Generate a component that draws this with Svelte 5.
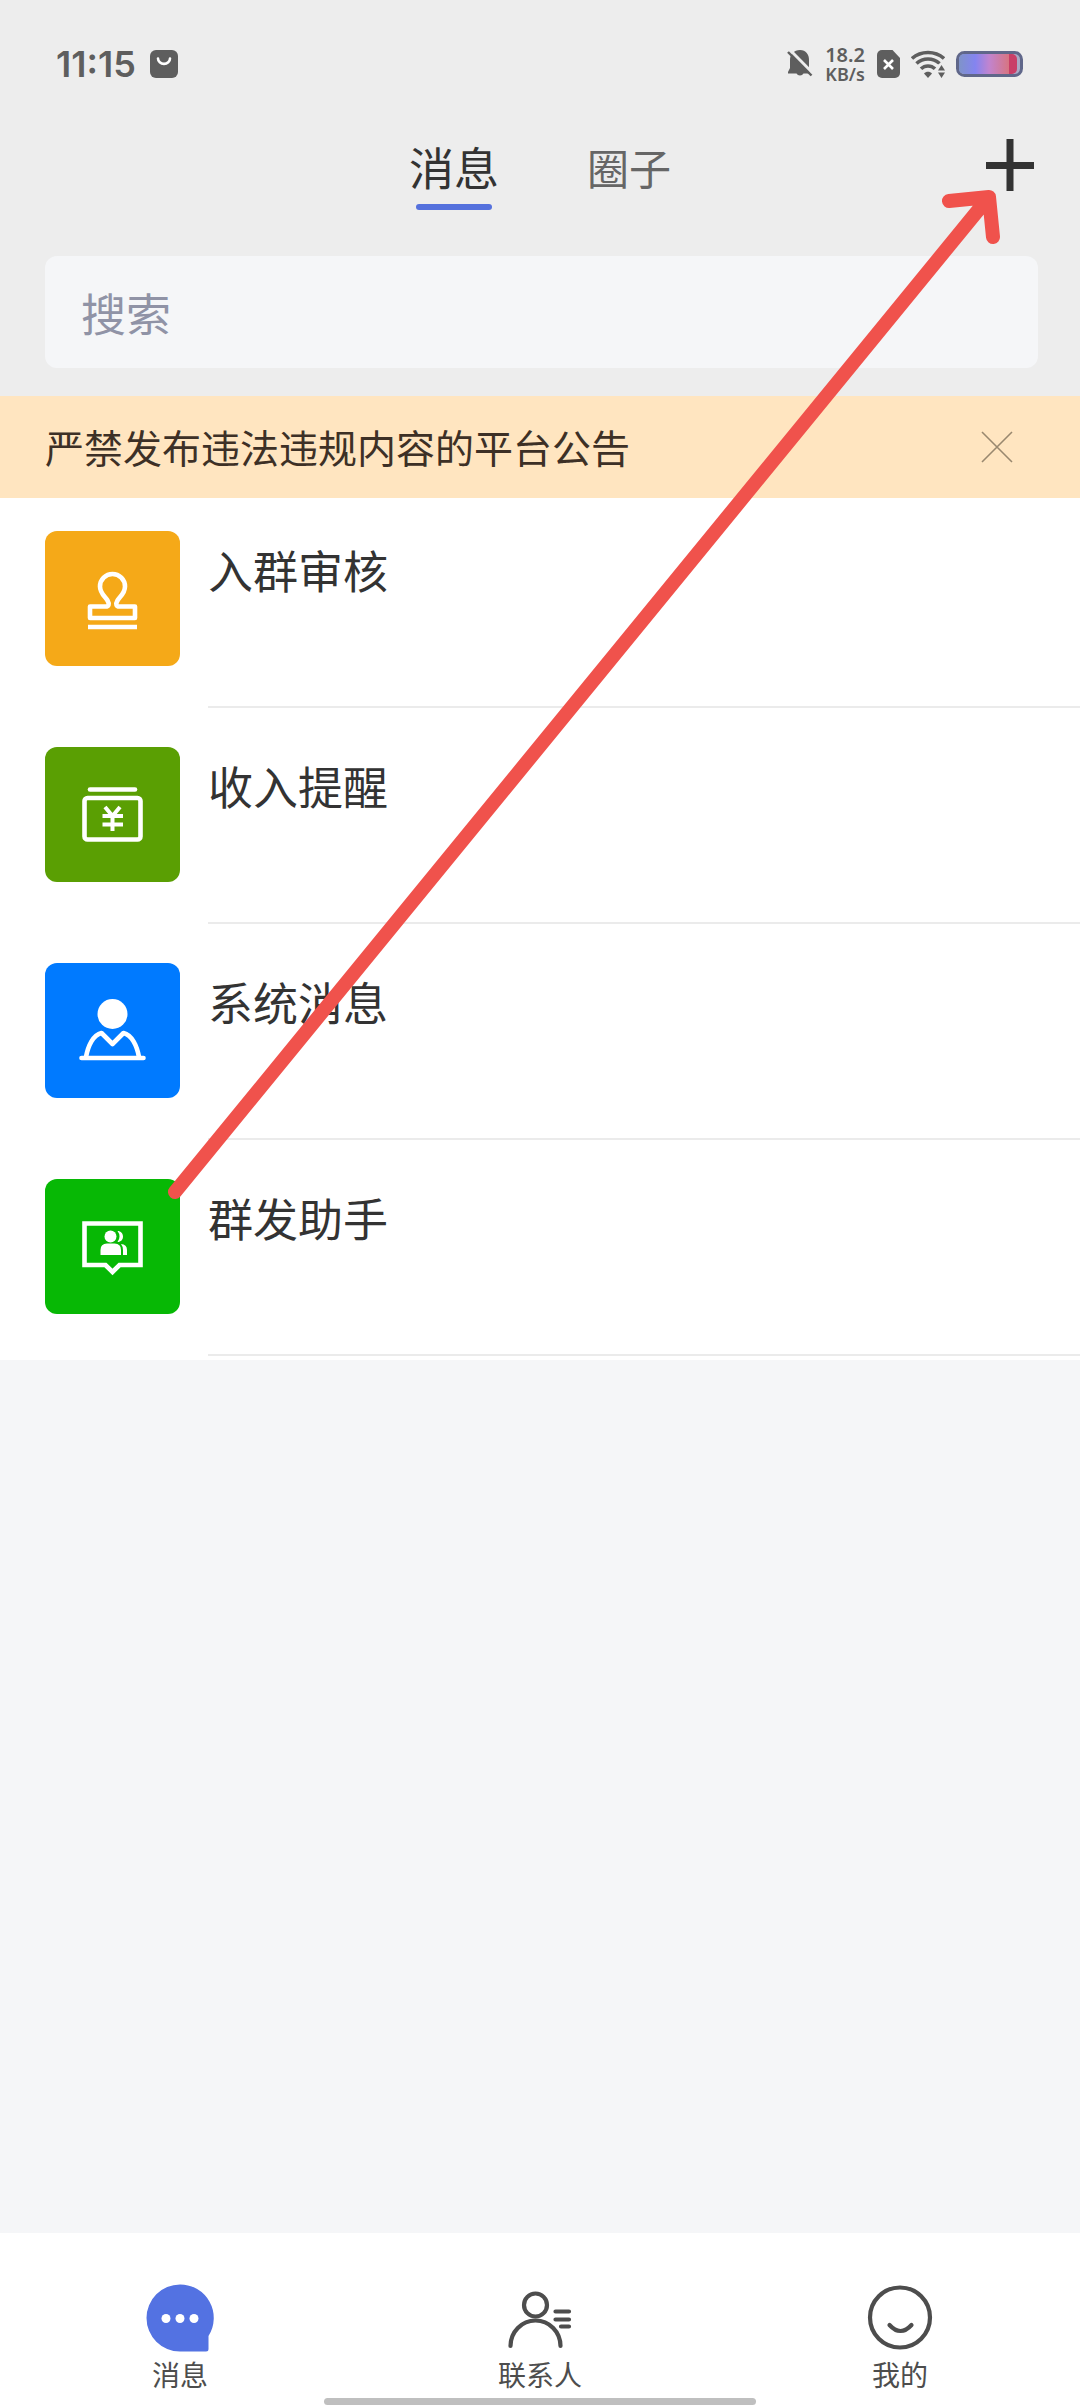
<script lang="ts">
	type Kind = 'stamp' | 'income' | 'system' | 'group';

	const entries: { kind: Kind; title: string; color: string }[] = [
		{ kind: 'stamp', title: '入群审核', color: '#f5a918' },
		{ kind: 'income', title: '收入提醒', color: '#5a9f03' },
		{ kind: 'system', title: '系统消息', color: '#007aff' },
		{ kind: 'group', title: '群发助手', color: '#07b805' }
	];

	const tabs = ['消息', '圈子'];

	let activeTab = $state('消息');
	let keyword = $state('');
	let noticeVisible = $state(true);
</script>

<div class="page">
	<header class="header">
		<div class="status-bar">
			<div class="status-left">
				<span class="clock">11:15</span>
				<svg width="28" height="28" viewBox="0 0 28 28" fill="none">
					<rect width="28" height="28" rx="6" fill="#5e5e5e" />
					<path d="M8 8.500a6 5.400 0 0 0 12 0" stroke="#fff" stroke-width="2.600" stroke-linecap="round" />
				</svg>
			</div>
			<div class="status-right">
				<!-- Muted bell -->
				<svg width="26" height="28" viewBox="0 0 26 28">
					<path d="M13 0C7 0 3 4.500 3 10v8L1 22v1.500h8.500a4 4 0 0 0 7 0H23L22 20V10C22 4.500 19 0 13 0z" fill="#5e5e5e" />
					<path d="M3 0L26 23.500" stroke="#ededed" stroke-width="3" />
					<path d="M1 2L24.500 25.500" stroke="#5e5e5e" stroke-width="2.400" />
				</svg>
				<div class="speed">
					<span class="speed-value">18.2</span>
					<span class="speed-unit">KB/s</span>
				</div>
				<!-- SIM missing -->
				<svg width="23" height="28" viewBox="0 0 23 28">
					<path d="M5 0h10.500L23 8v15a5 5 0 0 1-5 5H5a5 5 0 0 1-5-5V5a5 5 0 0 1 5-5z" fill="#5e5e5e" />
					<path d="M7 10l9 9M16 10l-9 9" stroke="#fff" stroke-width="2.600" />
				</svg>
				<!-- Wifi -->
				<svg width="34" height="28" viewBox="0 0 34 28" fill="none">
					<path d="M1 8.500C10 .5 24 .5 33 8.500" stroke="#5e5e5e" stroke-width="3.600" />
					<path d="M5.500 13.500c6.500-6 16.500-6 23 0" stroke="#5e5e5e" stroke-width="3.600" />
					<path d="M10 18.800c4-3.800 10-3.800 14 0" stroke="#5e5e5e" stroke-width="3.600" />
					<path d="M13 23.500c2-2.200 6-2.200 8 0L17 28z" fill="#5e5e5e" />
					<path d="M26 14.500h8v13.500h-8z" fill="#ededed" />
					<path d="M27 20.500l3.500-5.500 3.500 5.500zM27 22.500l3.500 5.500 3.500-5.500z" fill="#5e5e5e" />
				</svg>
				<!-- Battery -->
				<svg width="67" height="26" viewBox="0 0 67 26">
					<defs>
						<linearGradient id="charge">
							<stop offset="0" stop-color="#7f93c9" />
							<stop offset="0.28" stop-color="#8484f0" />
							<stop offset="0.52" stop-color="#c184cf" />
							<stop offset="0.86" stop-color="#d77582" />
							<stop offset="0.87" stop-color="#c93f68" />
							<stop offset="1" stop-color="#c93f68" />
						</linearGradient>
					</defs>
					<rect x="1.500" y="1.500" width="64" height="23" rx="7" fill="#a9a9c4" stroke="#60678a" stroke-width="3" />
					<rect x="3" y="3" width="58" height="20" rx="5" fill="url(#charge)" />
				</svg>
			</div>
		</div>

		<div class="top-bar">
			<div class="tabs" role="tablist">
				{#each tabs as tab}
					<button
						class="tab"
						class:active={activeTab === tab}
						role="tab"
						aria-selected={activeTab === tab}
						onclick={() => (activeTab = tab)}
					>
						{tab}
					</button>
				{/each}
			</div>
			<button class="add-btn" aria-label="添加">
				<svg width="48" height="52" viewBox="0 0 48 52">
					<path d="M24 0v52M0 26.500h48" stroke="#333" stroke-width="7" />
				</svg>
			</button>
		</div>

		<input class="search" type="text" placeholder="搜索" aria-label="搜索" bind:value={keyword} />
	</header>

	{#if noticeVisible}
		<div class="notice">
			<span class="notice-text">严禁发布违法违规内容的平台公告</span>
			<button class="notice-close" aria-label="关闭" onclick={() => (noticeVisible = false)}>
				<svg width="32" height="32" viewBox="0 0 32 32">
					<path d="M1 1l30 30M31 1L1 31" stroke="#99886f" stroke-width="1.600" />
				</svg>
			</button>
		</div>
	{/if}

	<ul class="list">
		{#each entries as entry}
			<li>
				<a class="entry" href="#{entry.kind}">
					<svg class="entry-icon" viewBox="0 0 135 135" fill="none" stroke="#fff" stroke-width="4.600" stroke-linejoin="round">
						<rect width="135" height="135" rx="12" fill={entry.color} stroke="none" />
						{#if entry.kind === 'stamp'}
							<path d="M45 87V75.500H60.500C64 75.500 64.500 73 62.500 69.500C60.500 66 55 62.500 55 55.500A12.500 12.500 0 0 1 80 55.500C80 62.500 74.500 66 72.500 69.500C70.500 73 71 75.500 74.500 75.500H90V87Z" />
							<path d="M43 96H92" />
						{:else if entry.kind === 'income'}
							<path d="M45 42.500H90" stroke-linecap="round" />
							<rect x="39.500" y="51" width="56" height="41.500" rx="3" />
							<path d="M60 60L67.500 69L75 60M67.500 68V84M57.500 69H78M57.500 77.500H78" stroke-width="4" />
						{:else if entry.kind === 'system'}
							<circle cx="67.500" cy="51" r="15" fill="#fff" stroke="none" />
							<path d="M41 94C43 83 48 72 56.500 70L67.500 81L78.500 70C87 72 92 83 94 94" />
							<path d="M36.500 95H98.500" stroke-linecap="round" />
						{:else}
							<path d="M39.500 44.500H95.500V86H74.500L67.500 93L60.500 86H39.500Z" stroke-linejoin="miter" />
							<g fill="#fff" stroke="none">
								<circle cx="65.500" cy="57.500" r="6" />
								<path d="M55.500 76V71Q55.500 64.500 62 64.500H69.500Q76 64.500 76 71V76Z" />
								<path d="M72.500 52C76 52 78 54.500 78 57.500S76 63 72.500 63Q74.500 60.500 74.500 57.500T72.500 52Z" />
								<path d="M76 65Q82 65.500 82 71V76H78V71Q78 67.500 76 65Z" />
							</g>
						{/if}
					</svg>
					<span class="entry-body">{entry.title}</span>
				</a>
			</li>
		{/each}
	</ul>

	<nav class="bottom-nav">
		<a class="nav-item" href="#messages">
			<svg width="68" height="68" viewBox="0 0 68 68">
				<path d="M34 0.500A33.500 33.500 0 0 1 62.500 52V65Q62.500 67.500 60 67.500H34A33.500 33.500 0 0 1 34 0.500Z" fill="#5372e2" />
				<circle cx="20" cy="34.500" r="4.500" fill="#fff" />
				<circle cx="34" cy="34.500" r="4.500" fill="#fff" />
				<circle cx="48" cy="34.500" r="4.500" fill="#fff" />
			</svg>
			<span>消息</span>
		</a>
		<a class="nav-item" href="#contacts">
			<svg width="68" height="68" viewBox="0 0 68 68" fill="none" stroke="#4d4d4d" stroke-width="4.200" stroke-linecap="round">
				<circle cx="29.500" cy="21" r="11.500" />
				<path d="M4.500 62A25 25.500 0 0 1 54.500 62" />
				<path d="M49.500 27.500H63M49.500 35.500H63M55 42.500H63" />
			</svg>
			<span>联系人</span>
		</a>
		<a class="nav-item" href="#me">
			<svg width="68" height="68" viewBox="0 0 68 68" fill="none" stroke="#4d4d4d" stroke-width="4.200" stroke-linecap="round">
				<circle cx="34" cy="33.500" r="30" />
				<path d="M23.500 41Q34.500 53 45.500 41" />
			</svg>
			<span>我的</span>
		</a>
		<div class="home-indicator"></div>
	</nav>

	<!-- Hint arrow pointing at the add button -->
	<svg class="hint-arrow" viewBox="0 0 1080 1220" fill="none" aria-hidden="true">
		<path d="M175 1192L989 197M949 201L989 197L993 237" stroke="#f0524c" stroke-width="14" stroke-linecap="round" stroke-linejoin="round" />
	</svg>
</div>

<style>
	:global(body) {
		background: #f5f6f8;
	}

	.page {
		position: relative;
		display: flex;
		flex-direction: column;
		min-height: 100vh;
		font-family: 'Noto Sans CJK SC', sans-serif;
		color: #333;
	}

	svg {
		display: block;
		flex-shrink: 0;
	}

	button {
		padding: 0;
		border: none;
		background: none;
		font: inherit;
		color: inherit;
		cursor: pointer;
	}

	a {
		color: inherit;
		text-decoration: none;
	}

	.header {
		display: flex;
		flex-direction: column;
		padding-bottom: 28px;
		background: #ededed;
	}

	.status-bar {
		display: flex;
		align-items: center;
		justify-content: space-between;
		height: 128px;
		padding: 0 57px 0 56px;
		color: #5e5e5e;
	}

	.status-left {
		display: flex;
		align-items: center;
		gap: 14px;
	}

	.clock {
		font-family: Inter, sans-serif;
		font-size: 36px;
		font-weight: 600;
	}

	.status-right {
		display: flex;
		align-items: center;
		gap: 11px;
	}

	.speed {
		display: flex;
		flex-direction: column;
		align-items: center;
		padding: 0 1px;
		font-family: 'Noto Sans', sans-serif;
		font-weight: 600;
	}

	.speed-value {
		font-size: 20px;
		line-height: 21px;
	}

	.speed-unit {
		font-size: 18px;
		line-height: 19px;
	}

	.top-bar {
		display: grid;
		grid-template-columns: 1fr auto 1fr;
		align-items: start;
		padding: 0 46px;
	}

	.tabs {
		grid-column: 2;
		display: flex;
		gap: 88px;
	}

	.tab {
		position: relative;
		padding-bottom: 4px;
		font-size: 42px;
		line-height: 78px;
		color: #666;
	}

	.tab.active {
		font-size: 45px;
		color: #333;
	}

	.tab.active::after {
		content: '';
		position: absolute;
		bottom: 0;
		left: 50%;
		width: 76px;
		height: 6px;
		border-radius: 3px;
		background: #5571dd;
		transform: translateX(-50%);
	}

	.add-btn {
		justify-self: end;
		height: 74px;
	}

	.search {
		height: 112px;
		margin: 46px 42px 0 45px;
		padding: 0 36px;
		border: none;
		border-radius: 12px;
		outline: none;
		background: #f5f6f8;
		font: inherit;
		font-size: 45px;
		color: #333;
	}

	.search::placeholder {
		color: #9093a6;
		opacity: 1;
	}

	.notice {
		display: flex;
		align-items: center;
		justify-content: space-between;
		height: 102px;
		padding: 0 67px 0 45px;
		background: #ffe5c0;
		color: #3d3026;
	}

	.notice-text {
		padding-bottom: 3px;
		font-size: 39px;
	}

	.list {
		display: flex;
		flex-direction: column;
		gap: 39px;
		margin: 0;
		padding: 33px 0 4px;
		background: #fff;
		list-style: none;
	}

	.entry {
		display: flex;
		gap: 28px;
		padding-left: 45px;
	}

	.entry-icon {
		width: 135px;
		height: 135px;
	}

	.entry-body {
		flex: 1;
		height: 175px;
		border-bottom: 2px solid #ebebeb;
		font-size: 45px;
		line-height: 78px;
	}

	.bottom-nav {
		position: relative;
		display: grid;
		grid-template-columns: repeat(3, 1fr);
		height: 175px;
		margin-top: auto;
		background: #fff;
	}

	.nav-item {
		display: flex;
		flex-direction: column;
		align-items: center;
		gap: 2px;
		padding-top: 51px;
		font-size: 28px;
		line-height: 40px;
		color: #4d4d4d;
	}

	.home-indicator {
		position: absolute;
		bottom: 3px;
		left: 30%;
		width: 40%;
		height: 7px;
		border-radius: 4px;
		background: #bfbfbf;
	}

	.hint-arrow {
		position: absolute;
		top: 0;
		left: 0;
		width: 100%;
		pointer-events: none;
	}
</style>
